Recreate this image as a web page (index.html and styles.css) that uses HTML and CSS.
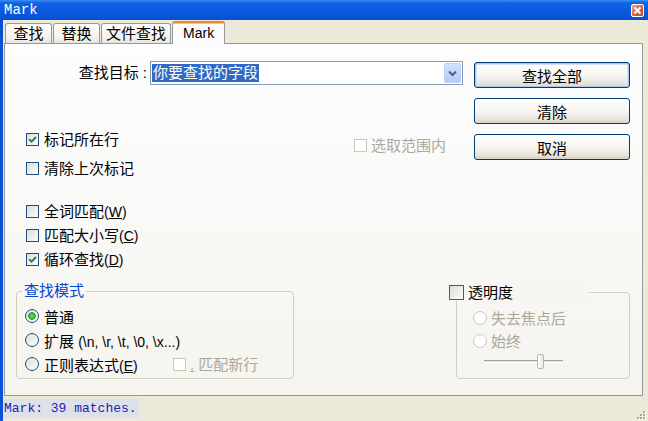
FILE: index.html
```html
<!DOCTYPE html>
<html>
<head>
    <title>Mark</title>
    <link rel="stylesheet" href="styles.css">
</head>
<body>

<div class="window">
    <div class="titlebar">
        <span class="title">Mark</span>
        <span class="close-btn">
            <svg width="9" height="9" viewBox="0 0 9 9"><path d="M1.5 1.5 L7.5 7.5 M7.5 1.5 L1.5 7.5" stroke="#fff" stroke-width="1.8"/></svg>
        </span>
    </div>

    <div class="frame">
        <div class="tabs">
            <div class="tab first">查找</div>
            <div class="tab">替换</div>
            <div class="tab">文件查找</div>
            <div class="tab active">Mark</div>
        </div>

        <div class="panel">
            <div class="top">
                <div class="options">
                    <div class="find-row">
                        <label class="find-label">查找目标 :</label>
                        <div class="combo">
                            <span class="combo-text">你要查找的字段</span>
                            <span class="combo-arrow">
                                <svg width="9" height="7" viewBox="0 0 9 7"><path d="M1 1.5 L4.5 5 L8 1.5" stroke="#4d6185" stroke-width="2" fill="none"/></svg>
                            </span>
                        </div>
                    </div>

                    <div class="check-row row-1">
                        <label class="check wide"><span class="box"><svg width="9" height="9" viewBox="0 0 9 9"><path d="M1.2 4.2 L3.6 6.6 L8 2" stroke="#1f8a4c" stroke-width="2" fill="none"/></svg></span>标记所在行</label>
                        <label class="check disabled in-sel"><span class="box"></span>选取范围内</label>
                    </div>
                    <div class="check-row row-2">
                        <label class="check"><span class="box"></span>清除上次标记</label>
                    </div>
                    <div class="check-row row-3">
                        <label class="check"><span class="box"></span><span>全词匹配<span class="latin">(<u>W</u>)</span></span></label>
                    </div>
                    <div class="check-row row-4">
                        <label class="check"><span class="box"></span><span>匹配大小写<span class="latin">(<u>C</u>)</span></span></label>
                    </div>
                    <div class="check-row row-4">
                        <label class="check"><span class="box"><svg width="9" height="9" viewBox="0 0 9 9"><path d="M1.2 4.2 L3.6 6.6 L8 2" stroke="#1f8a4c" stroke-width="2" fill="none"/></svg></span><span>循环查找<span class="latin">(<u>D</u>)</span></span></label>
                    </div>
                </div>

                <div class="buttons">
                    <button class="btn default">查找全部</button>
                    <button class="btn">清除</button>
                    <button class="btn">取消</button>
                </div>
            </div>

            <div class="groups">
                <fieldset class="group mode">
                    <legend>查找模式</legend>
                    <div class="radio-row"><span class="radio on"></span>普通</div>
                    <div class="radio-row"><span class="radio"></span><span>扩展 <span class="latin">(\n, \r, \t, \0, \x...)</span></span></div>
                    <div class="radio-row">
                        <span class="regex"><span class="radio"></span><span>正则表达式<span class="latin">(<u>E</u>)</span></span></span>
                        <label class="check disabled"><span class="box"></span><span><u>.</u> 匹配新行</span></label>
                    </div>
                </fieldset>

                <fieldset class="group transparency">
                    <legend><label class="check"><span class="box big"></span>透明度</label></legend>
                    <div class="radio-row disabled"><span class="radio"></span>失去焦点后</div>
                    <div class="radio-row disabled"><span class="radio"></span>始终</div>
                    <div class="slider">
                        <span class="track left"></span>
                        <span class="thumb"></span>
                        <span class="track right"></span>
                    </div>
                </fieldset>
            </div>
        </div>

        <div class="statusbar">
            <span class="status-text">Mark: 39 matches.</span>
            <svg class="grip" width="12" height="12" viewBox="0 0 12 12">
                <g fill="#fff">
                    <rect x="10" y="4" width="2" height="2"/><rect x="7" y="7" width="2" height="2"/><rect x="10" y="7" width="2" height="2"/>
                    <rect x="4" y="10" width="2" height="2"/><rect x="7" y="10" width="2" height="2"/><rect x="10" y="10" width="2" height="2"/>
                </g>
                <g fill="#aca899">
                    <rect x="9" y="3" width="2" height="2"/><rect x="6" y="6" width="2" height="2"/><rect x="9" y="6" width="2" height="2"/>
                    <rect x="3" y="9" width="2" height="2"/><rect x="6" y="9" width="2" height="2"/><rect x="9" y="9" width="2" height="2"/>
                </g>
            </svg>
        </div>
    </div>
</div>

</body>
</html>
```

FILE: styles.css
```css
body {
    margin: 0;
    background: #ece9d8;
    font-family: "Liberation Sans", "Noto Sans CJK SC", sans-serif;
    font-size: 15px;
    color: #000;
    text-autospace: no-autospace;
}

.window {
    width: 648px;
    height: 421px;
    display: flex;
    flex-direction: column;
    overflow: hidden;
    background: #ece9d8;
}

/* Title bar */
.titlebar {
    height: 20px;
    display: flex;
    align-items: center;
    justify-content: space-between;
    padding: 0 4px 0 4px;
    background: linear-gradient(#3d8ef7 0, #0f62e4 3px, #0a59dd 60%, #0550d2 100%);
}
.title {
    font-family: "Liberation Mono", monospace;
    font-size: 14px;
    line-height: 20px;
    color: #fff;
}
.close-btn {
    box-sizing: border-box;
    width: 13px;
    height: 13px;
    border: 1px solid #fff;
    border-radius: 2px;
    background: linear-gradient(135deg, #f2a584, #d9603a 55%, #c04a22);
    display: flex;
    align-items: center;
    justify-content: center;
}

.frame {
    flex: 1;
    display: flex;
    flex-direction: column;
    border-left: 3px solid #0b50d6;
}

/* Tabs */
.tabs {
    display: flex;
    align-items: flex-end;
    height: 22px;
    margin-top: 1px;
    padding-left: 2px;
}
.tab {
    box-sizing: border-box;
    height: 20px;
    min-width: 47px;
    padding: 0 4px;
    margin-right: 1px;
    border: 1px solid #919b9c;
    border-bottom: none;
    border-radius: 3px 3px 0 0;
    background: linear-gradient(#ffffff, #f3f2ee 70%, #e5e4de);
    line-height: 19px;
    text-align: center;
}
.tab.active {
    position: relative;
    z-index: 1;
    height: 23px;
    margin-bottom: -1px;
    margin-right: 0;
    padding: 0 10px;
    border-top: 2px solid #e68b2c;
    box-shadow: inset 0 1px 0 #ffc83c;
    background: #fcfcfe;
    font-size: 14px;
    line-height: 21px;
}

/* Tab page */
.panel {
    box-sizing: border-box;
    width: 639px;
    height: 353px;
    margin-left: 1px;
    border: 1px solid #919b9c;
    background: linear-gradient(#fdfdfe, #f5f4ef);
}

.top {
    display: flex;
}
.options {
    flex: 1;
}

.find-row {
    display: flex;
    height: 24px;
    margin-top: 17px;
}
.find-label {
    width: 145px;
    padding-right: 3px;
    box-sizing: border-box;
    text-align: right;
    line-height: 24px;
}
.combo {
    box-sizing: border-box;
    width: 313px;
    height: 24px;
    padding: 0 1px 0 1px;
    display: flex;
    align-items: center;
    justify-content: space-between;
    border: 1px solid #7f9db9;
    background: #fff;
}
.combo-text {
    background: #316ac5;
    color: #fff;
    line-height: 18px;
    padding: 0 1px;
}
.combo-arrow {
    box-sizing: border-box;
    width: 17px;
    height: 20px;
    display: flex;
    align-items: center;
    justify-content: center;
    border: 1px solid #bcd0fa;
    border-radius: 2px;
    background: linear-gradient(#d2e0fd, #b6cbf6);
}

.latin {
    font-size: 14px;
}

/* Check boxes */
.check-row {
    display: flex;
    align-items: center;
    height: 19px;
    padding-left: 21px;
}
.row-1 { margin-top: 45px; }
.row-2 { margin-top: 10px; }
.row-3 { margin-top: 24px; }
.row-4 { margin-top: 5px; }

.check {
    display: flex;
    align-items: center;
    gap: 5px;
    height: 19px;
    line-height: 19px;
    white-space: nowrap;
}
.check.wide {
    width: 328px;
}
.check.in-sel {
    margin-top: 12px;
    gap: 4px;
}
.box {
    box-sizing: border-box;
    width: 13px;
    height: 13px;
    flex-shrink: 0;
    display: flex;
    align-items: center;
    justify-content: center;
    border: 1px solid #1c5180;
    background: linear-gradient(135deg, #dcdcd7, #fdfdfc);
}
.box.big {
    width: 15px;
    height: 15px;
    border-color: #35608e;
}
.disabled {
    color: #aca899;
}
.disabled .box {
    border-color: #cac8bb;
    background: #fff;
}

/* Buttons */
.buttons {
    width: 156px;
    margin: 18px 12px 0 11px;
    display: flex;
    flex-direction: column;
    gap: 10px;
}
.btn {
    height: 26px;
    padding: 0;
    font-family: inherit;
    font-size: 15px;
    color: #000;
    border: 1px solid #003c74;
    border-radius: 3px;
    background: linear-gradient(#ffffff, #f5f4f0 55%, #e6e3d9 85%, #d6d0c5);
}
.btn.default {
    box-shadow: inset 0 0 0 1px #a9c6f3, inset 0 0 0 2px #d3e1f9;
}

/* Group boxes */
.groups {
    display: flex;
    align-items: flex-start;
    justify-content: space-between;
    margin-top: 14px;
    padding: 0 12px 0 11px;
}
.group {
    box-sizing: border-box;
    min-width: 0;
    margin: 0;
    padding: 5px 0 2px 0;
    border: 1px solid #d0d0bf;
    border-radius: 4px;
}
.group legend {
    padding: 0 2px;
    margin-left: 5px;
    line-height: 16px;
    color: #0046d5;
}
.mode {
    width: 278px;
}
.transparency {
    width: 174px;
    padding-bottom: 8px;
}
.transparency legend {
    box-sizing: border-box;
    width: 140px;
    padding: 0;
    margin-left: -8px;
    line-height: 18px;
    color: #000;
    background: #f6f5f1;
}
.transparency .check {
    height: 18px;
    gap: 4px;
}

.radio-row {
    display: flex;
    align-items: center;
    gap: 5px;
    height: 24px;
    padding-left: 8px;
    white-space: nowrap;
}
.transparency .radio-row {
    height: 23px;
    padding-left: 16px;
    gap: 4px;
}
.radio {
    box-sizing: border-box;
    width: 14px;
    height: 14px;
    flex-shrink: 0;
    border: 1px solid #1c5180;
    border-radius: 50%;
    background: linear-gradient(135deg, #dcdcd7, #fdfdfc);
}
.radio.on {
    background: radial-gradient(circle, #6fe06f 0, #3bb83b 2.5px, #2a9a2a 3.5px, transparent 4px), linear-gradient(135deg, #dcdcd7, #fdfdfc);
}
.disabled .radio {
    border-color: #cac8bb;
    background: #fff;
}
.regex {
    width: 143px;
    display: flex;
    align-items: center;
    gap: 5px;
}
.regex + .check {
    gap: 4px;
}

/* Slider */
.slider {
    display: flex;
    align-items: center;
    height: 18px;
    padding-left: 27px;
}
.track {
    box-sizing: border-box;
    height: 3px;
    border-top: 1px solid #a3a298;
    border-bottom: 1px solid #fff;
    background: #e4e3dc;
}
.track.left { width: 53px; }
.track.right { width: 19px; }
.thumb {
    box-sizing: border-box;
    width: 7px;
    height: 15px;
    border: 1px solid #b9b7aa;
    border-radius: 2px;
    background: linear-gradient(90deg, #fff, #e8e7e0);
}

/* Status bar */
.statusbar {
    flex: 1;
    display: flex;
    justify-content: space-between;
    align-items: flex-start;
    padding-top: 3px;
}
.status-text {
    font-family: "Liberation Mono", monospace;
    font-size: 13px;
    line-height: 19px;
    padding: 0 2px 0 1px;
    color: #2323b0;
    background: #dde1ea;
}
.grip {
    align-self: flex-end;
    margin: 0 2px 1px 0;
}
```
